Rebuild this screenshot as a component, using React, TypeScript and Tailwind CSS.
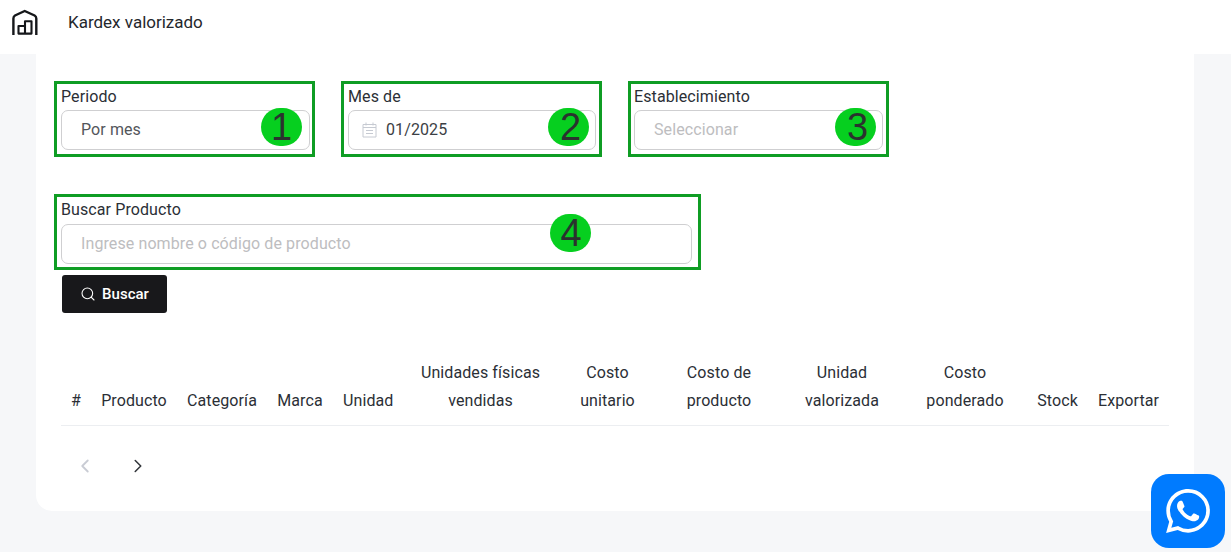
import React from "react";
import { ChevronLeft, ChevronRight, Search } from "lucide-react";

function Mark({ n, left }: { n: string; left: string }) {
  return (
    <div className={`absolute w-[41px] h-[38px] rounded-full bg-[#06cf1f] flex items-center justify-center text-[38px] leading-none text-[#2a332e] font-['Liberation_Sans',sans-serif] ${left}`}>
      {n}
    </div>
  );
}

function Field({ label, className, boxClass, labelClass, children }: { label: string; className: string; boxClass: string; labelClass?: string; children: React.ReactNode }) {
  return (
    <div className={`relative ${className}`}>
      <div className={`absolute border-[3px] border-[#0f9d24] ${boxClass}`} />
      <label className={`block h-[23px] text-[16px] leading-[19px] text-[#2b2f36] tracking-[0.1px] ${labelClass ?? ""}`}>{label}</label>
      {children}
    </div>
  );
}

const inputClass = "relative h-[40px] border border-[#cfcfd1] rounded-[7px] flex items-center text-[16px] tracking-[0.1px] bg-white";

const cols: { w: string; l: string[] }[] = [
  { w: "w-[30px]", l: ["#"] },
  { w: "w-[86px]", l: ["Producto"] },
  { w: "w-[90px]", l: ["Categoría"] },
  { w: "w-[66px]", l: ["Marca"] },
  { w: "w-[70px]", l: ["Unidad"] },
  { w: "w-[155px]", l: ["Unidades físicas", "vendidas"] },
  { w: "w-[99px]", l: ["Costo", "unitario"] },
  { w: "w-[124px]", l: ["Costo de", "producto"] },
  { w: "w-[122px]", l: ["Unidad", "valorizada"] },
  { w: "w-[124px]", l: ["Costo", "ponderado"] },
  { w: "w-[61px]", l: ["Stock"] },
  { w: "w-[81px]", l: ["Exportar"] },
];

export default function App() {
  return (
    <div className="relative h-[552px] w-[1231px] overflow-hidden bg-[#f6f7f9] font-['Roboto',sans-serif]">
      <header className="h-[54px] bg-white flex items-center">
        <svg className="ml-[11px] mt-[-9px]" width="28" height="28" viewBox="0 0 28 28" fill="none" stroke="#15171a" strokeWidth="2.4">
          <path d="M2.4 26V9.5Q2.4 7.5 4 6.5L13.7 2 23.6 6.5Q25.3 7.5 25.3 9.5V26" />
          <path d="M7.5 24.6V17H14V24.6ZM14 24.6V12.2H20.5V24.6Z" strokeWidth="2.1" strokeLinejoin="round" />
        </svg>
        <span className="ml-[29px] mt-[-9px] text-[17px] text-[#24272c]">Kardex valorizado</span>
      </header>

      <main className="ml-[36px] w-[1158px] h-[457px] bg-white rounded-b-[16px] pl-[25px] pr-[25px] pt-[33px]">
        <div className="flex">
          <Field label="Periodo" className="w-[249px] mr-[38px]" boxClass="left-[-7px] top-[-6px] bottom-[-7px] right-[-5px]">
            <div className={`${inputClass} pl-[19px] text-[#53565b]`}>Por mes</div>
            <Mark n="1" left="left-[200px] top-[21px]" />
          </Field>
          <Field label="Mes de" className="w-[248px] mr-[38px]" boxClass="left-[-7px] top-[-6px] bottom-[-7px] right-[-6px]">
            <div className={`${inputClass} pl-[13px] text-[#3c3f45]`}>
              <svg className="mr-[9px]" width="15" height="16" viewBox="0 0 15 16" fill="none" stroke="#c6cad2" strokeWidth="1">
                <path d="M1 2.5H14V15H1ZM1 5.5H14M4 .5V3.5M11 .5V3.5M4 8.5H11M4 11.5H11" />
              </svg>
              01/2025
            </div>
            <Mark n="2" left="left-[200px] top-[21px] pl-[4px]" />
          </Field>
          <Field label="Establecimiento" className="w-[249px]" boxClass="left-[-6px] top-[-6px] bottom-[-7px] right-[-6px]">
            <div className={`${inputClass} pl-[19px] text-[#bdbdc0]`}>Seleccionar</div>
            <Mark n="3" left="left-[201px] top-[21px] pl-[4px]" />
          </Field>
        </div>

        <div className="mt-[51px]">
          <Field label="Buscar Producto" labelClass="relative top-[-1px]" className="w-[631px]" boxClass="left-[-7px] top-[-7px] bottom-[-6px] right-[-9px]">
            <div className={`${inputClass} pl-[19px] text-[#bdbdc0]`}>Ingrese nombre o código de producto</div>
            <Mark n="4" left="left-[489px] top-[13px] pl-[1px]" />
          </Field>
        </div>

        <button className="mt-[11px] ml-[1px] w-[105px] h-[38px] rounded-[3px] bg-[#18181b] text-white text-[15px] font-medium flex items-center justify-center gap-[6px]">
          <Search size={16} strokeWidth={1.6} />
          Buscar
        </button>

        <table className="mt-[46px] w-[1108px] table-fixed border-collapse text-[16px] text-[#2b2f36] tracking-[0.1px]">
          <thead>
            <tr className="border-b border-[#eceef1]">
              {cols.map((c) => (
                <th key={c.l[0]} className={`${c.w} px-[10px] pb-[10px] font-normal align-bottom text-center leading-[28px] whitespace-nowrap`}>
                  {c.l.map((t) => (
                    <div key={t}>{t}</div>
                  ))}
                </th>
              ))}
            </tr>
          </thead>
        </table>

        <div className="mt-[29px] ml-[13px] flex items-center gap-[31px]">
          <ChevronLeft size={22} strokeWidth={2} className="text-[#c9ccd4]" />
          <ChevronRight size={22} strokeWidth={1.7} className="text-[#33363b]" />
        </div>
      </main>

      <div className="absolute left-[1151px] top-[474px] w-[74px] h-[74px] rounded-[18px] bg-[#007bff] flex items-center justify-center">
        <svg width="44" height="44" viewBox="0 0 24 24" fill="white">
          <path d="M17.47 14.38c-.3-.15-1.76-.87-2.03-.97-.27-.1-.47-.15-.67.15-.2.3-.77.97-.94 1.16-.17.2-.35.22-.64.08-.3-.15-1.26-.46-2.39-1.48-.88-.79-1.48-1.76-1.65-2.06-.17-.3-.02-.46.13-.6.13-.14.3-.35.45-.52.15-.17.2-.3.3-.5.1-.2.05-.37-.03-.52-.07-.15-.67-1.61-.92-2.21-.24-.58-.49-.5-.67-.51h-.57c-.2 0-.52.07-.79.37-.27.3-1.04 1.02-1.04 2.48 0 1.46 1.07 2.87 1.21 3.07.15.2 2.1 3.2 5.08 4.49.71.3 1.26.49 1.7.62.71.23 1.36.2 1.87.12.57-.09 1.76-.72 2.01-1.41.25-.69.25-1.29.17-1.41-.07-.13-.27-.2-.57-.35zM12.05 21.79h-.01a9.87 9.87 0 0 1-5.03-1.38l-.36-.21-3.74.98 1-3.65-.24-.37a9.86 9.86 0 0 1-1.51-5.26c0-5.45 4.44-9.88 9.89-9.88 2.64 0 5.12 1.03 6.99 2.9a9.83 9.83 0 0 1 2.89 6.99c0 5.45-4.44 9.88-9.89 9.88zM20.46 3.49A11.82 11.82 0 0 0 12.05 0C5.5 0 .16 5.34.16 11.89c0 2.1.55 4.14 1.59 5.95L.06 24l6.3-1.65a11.88 11.88 0 0 0 5.68 1.45h.01c6.55 0 11.89-5.34 11.89-11.89a11.82 11.82 0 0 0-3.48-8.41z" />
        </svg>
      </div>
    </div>
  );
}
